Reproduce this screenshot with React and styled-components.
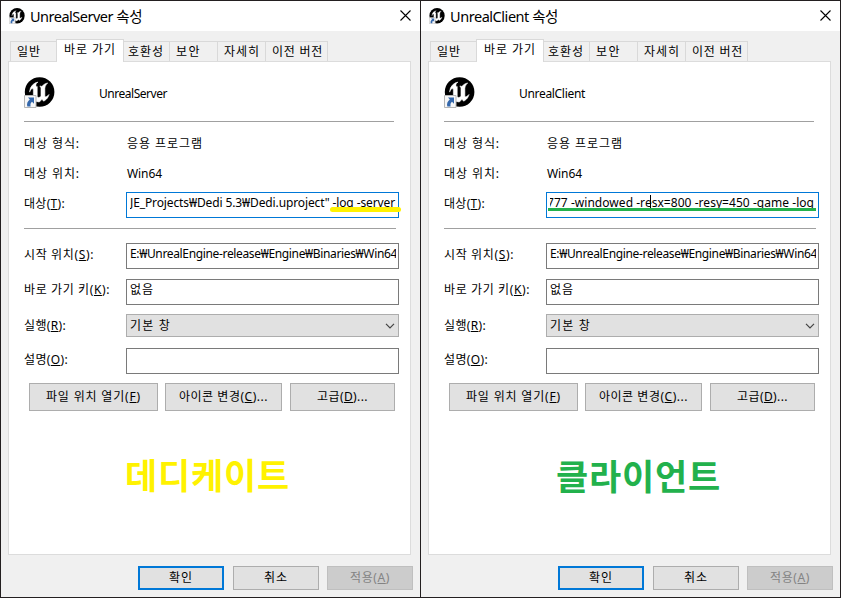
import React, { useLayoutEffect, useRef, useState } from "react";
import styled, { createGlobalStyle, css } from "styled-components";

const Global = createGlobalStyle`
  html, body { margin: 0; padding: 0; background: #231f20; overflow: hidden; }
  * { box-sizing: border-box; }
  body { font-family: "Noto Sans", "Noto Sans CJK KR", sans-serif; font-size: 12px; color: #000; }
`;

const Desktop = styled.div`
  display: flex;
  gap: 1px;
  width: 841px;
  height: 598px;
  padding: 1px;
  background: #231f20;
`;

const Dialog = styled.section`
  display: flex;
  flex-direction: column;
  width: 419px;
  height: 596px;
  background: #f0f0f0;
`;

const TitleBar = styled.header`
  display: flex;
  align-items: center;
  height: 30px;
  padding: 0 9px 0 8px;
  background: #fff;
`;

const Title = styled.h1`
  flex: 1;
  margin: 0 0 0 5px;
  font-size: 14.5px;
  font-weight: 400;
  line-height: 20px;
`;

const CloseButton = styled.button`
  display: flex;
  margin-bottom: 1px;
  padding: 0;
  border: 0;
  background: none;
`;

const TabStrip = styled.nav`
  display: flex;
  align-items: flex-end;
  height: 30px;
  padding-left: 9px;
`;

const Tab = styled.div`
  width: ${(p) => p.$width}px;
  height: 20px;
  padding-left: ${(p) => p.$pad}px;
  border: 1px solid #d9d9d9;
  border-left-width: ${(p) => (p.$first || p.$active ? 1 : 0)}px;
  border-right-width: ${(p) => (p.$first ? 0 : 1)}px;
  border-bottom: 0;
  background: #f0f0f0;
  line-height: 20px;
  ${(p) =>
    p.$active &&
    css`
      z-index: 1;
      height: 23px;
      margin-bottom: -1px;
      background: #fff;
      line-height: 19px;
    `}
`;

const Panel = styled.main`
  width: 403px;
  height: 494px;
  margin-left: 7px;
  padding-left: 15px;
  border: 1px solid #dcdcdc;
  background: #fff;
`;

const Heading = styled.div`
  display: flex;
  align-items: flex-start;
  height: 59px;
  padding-top: 15px;
`;

const ShortcutName = styled.div`
  margin: 8px 0 0 44px;
  line-height: 18px;
`;

const Rule = styled.div`
  width: ${(p) => p.$width}px;
  height: 1px;
  background: #a0a0a0;
`;

const Row = styled.div`
  display: flex;
  height: ${(p) => p.$height}px;
  margin-top: ${(p) => p.$top}px;
`;

const Label = styled.label`
  width: 102px;
  line-height: 18px;
  margin-top: ${(p) => p.$offset || 0}px;
`;

const Value = styled.div`
  padding-left: 1px;
  line-height: 18px;
  margin-top: 1px;
`;

const Field = styled.div`
  position: relative;
  width: 273px;
  height: 26px;
  padding: 1px 2px 0 3px;
  border: 1px solid ${(p) => (p.$focused ? "#0078d7" : "#7a7a7a")};
  background: #fff;
  line-height: 18px;
`;

const Clip = styled.div`
  display: flex;
  justify-content: ${(p) => (p.$end ? "flex-end" : "flex-start")};
  height: 18px;
  margin-right: ${(p) => (p.$end ? 2 : 0)}px;
  overflow: hidden;
`;

const Marker = styled.span`
  position: absolute;
  top: ${(p) => p.$top}px;
  left: ${(p) => p.$left}px;
  width: ${(p) => p.$width}px;
  height: ${(p) => p.$height}px;
  border-radius: ${(p) => (p.$round ? 3 : 0)}px;
  background: ${(p) => p.$color};
`;

const Select = styled.div`
  display: flex;
  align-items: center;
  justify-content: space-between;
  width: 273px;
  height: 23px;
  padding: 0 3px 0 3px;
  border: 1px solid #adadad;
  background: #e1e1e1;
  line-height: 18px;
`;

const Button = styled.button`
  display: flex;
  align-items: center;
  justify-content: center;
  width: ${(p) => p.$width}px;
  height: ${(p) => p.$height}px;
  padding: 0 0 1px;
  border: ${(p) => (p.$primary ? "2px solid #0078d7" : "1px solid #adadad")};
  background: #e1e1e1;
  color: #000;
  font: inherit;
  line-height: 18px;
  &:disabled {
    border-color: #bfbfbf;
    background: #ccc;
    color: #838383;
  }
`;

const Actions = styled.div`
  display: flex;
  margin: 9px 0 0 5px;
  gap: 7px;
  & > :last-child { margin-left: 1px; }
`;

const Footer = styled.footer`
  display: flex;
  justify-content: flex-end;
  gap: 9px;
  margin-top: 11px;
  padding-right: 7px;
  & > :last-child { margin-left: -1px; }
`;

const Note = styled.div`
  margin: ${(p) => p.$top}px 0 0 ${(p) => p.$left}px;
  color: ${(p) => p.$color};
  font-size: 35px;
  font-weight: 700;
  line-height: 48px;
`;

const Run = styled.span`
  display: inline-block;
  flex: none;
  white-space: pre;
`;

const Key = styled.span`
  text-decoration: underline;
  text-underline-offset: 1px;
  text-decoration-thickness: 1px;
`;

/* Spaces the letters so that the run takes the given width. */
function Fit({ w, pre = "", hot, post = "" }) {
  const ref = useRef(null);
  const [spacing, setSpacing] = useState(0);
  const count = (pre + (hot || "") + post).length;
  useLayoutEffect(() => {
    const el = ref.current;
    el.style.letterSpacing = "0px";
    const next = (w - el.getBoundingClientRect().width) / count;
    el.style.letterSpacing = next + "px";
    setSpacing(next);
  }, [w, count]);
  return (
    <Run ref={ref} style={{ letterSpacing: spacing }}>
      {pre}
      {hot && <Key>{hot}</Key>}
      {post}
    </Run>
  );
}

function UnrealIcon({ size }) {
  return (
    <svg width={size} height={size} viewBox="0 0 31 31">
      <circle cx="15.6" cy="15" r="14.8" fill="#000" />
      <path
        transform="translate(-.6 -1.4) scale(1.34 1.37)"
        fill="#fff"
        stroke="#fff"
        strokeWidth=".4"
        d="M19.13 13.729c-.206.997-1.126 3.557-4.06 4.942l-1.179-1.325-1.988 2a7.338 7.338 0 0 1-5.804-2.978 2.859 2.859 0 0 0 .65.123c.326.006.678-.114.678-.66v-5.394a.89.89 0 0 0-1.116-.89c-.92.212-1.656 2.509-1.656 2.509a7.304 7.304 0 0 1 2.528-5.597 7.408 7.408 0 0 1 3.73-1.721c-1.006.573-1.57 1.507-1.57 2.29 0 1.262.76 1.109.984.923v7.28a1.157 1.157 0 0 0 .148.256 1.075 1.075 0 0 0 .88.445c.76 0 1.747-.868 1.747-.868V9.172c0-.6-.452-1.324-.905-1.572 0 0 .838-.149 1.484.346a5.537 5.537 0 0 1 .387-.425c1.508-1.48 2.929-1.902 4.112-2.112 0 0-2.151 1.69-2.151 3.96 0 1.687.043 5.801.043 5.801.799.771 1.986-.342 3.059-1.441Z"
      />
      <path d="M.5 18.5h11.5v12H.5z" fill="#f7f7f7" stroke="#b5b5b5" />
      <path d="M4 20.5h6v6.2l-2-1.9c-1.5 1.3-1.8 2.6-1.4 4.7H3.3c-.8-3 .3-5.300 2.500-7z" fill="#3467ab" />
    </svg>
  );
}

const TABS = [
  { text: "일반", w: 24, width: 46, pad: 6 },
  { text: "바로 가기", w: 52, width: 68, pad: 7, active: true },
  { text: "호환성", w: 36, width: 46, pad: 4 },
  { text: "보안", w: 25, width: 48, pad: 6 },
  { text: "자세히", w: 36, width: 48, pad: 6 },
  { text: "이전 버전", w: 51, width: 62, pad: 6 },
];

function Properties({ name, titleWidth, nameWidth, target, note }) {
  return (
    <Dialog>
      <TitleBar>
        <UnrealIcon size={16} />
        <Title><Fit w={titleWidth} pre={`${name} 속성`} /></Title>
        <CloseButton aria-label="닫기">
          <svg width="11" height="11" viewBox="0 0 11 11">
            <path d="M.5.5l10 10M10.5.5l-10 10" stroke="#000" strokeWidth="1.1" />
          </svg>
        </CloseButton>
      </TitleBar>
      <TabStrip>
        {TABS.map((t, i) => (
          <Tab key={t.text} $width={t.width} $pad={t.pad} $active={t.active} $first={i === 0}>
            <Fit w={t.w} pre={t.text} />
          </Tab>
        ))}
      </TabStrip>
      <Panel>
        <Heading>
          <UnrealIcon size={31} />
          <ShortcutName><Fit w={nameWidth} pre={name} /></ShortcutName>
        </Heading>
        <Rule $width={370} />
        <Row $height={18} $top={12}>
          <Label $offset={1}><Fit w={56} pre="대상 형식:" /></Label>
          <Value><Fit w={76} pre="응용 프로그램" /></Value>
        </Row>
        <Row $height={18} $top={12}>
          <Label $offset={1}><Fit w={56} pre="대상 위치:" /></Label>
          <Value><Fit w={35} pre="Win64" /></Value>
        </Row>
        <Row $height={26} $top={10}>
          <Label $offset={3}><Fit w={41} pre="대상(" hot="T" post="):" /></Label>
          <Field $focused>{target}</Field>
        </Row>
        <Row $height={1} $top={10}><Rule $width={372} /></Row>
        <Row $height={26} $top={14}>
          <Label $offset={3}><Fit w={70} pre="시작 위치(" hot="S" post="):" /></Label>
          <Field>
            <Clip><Fit w={267} pre="E:₩UnrealEngine-release₩Engine₩Binaries₩Win64" /></Clip>
          </Field>
        </Row>
        <Row $height={26} $top={10}>
          <Label $offset={2}><Fit w={86} pre="바로 가기 키(" hot="K" post="):" /></Label>
          <Field><Fit w={24} pre="없음" /></Field>
        </Row>
        <Row $height={23} $top={9}>
          <Label $offset={3}><Fit w={42} pre="실행(" hot="R" post="):" /></Label>
          <Select>
            <Fit w={41} pre="기본 창" />
            <svg width="10" height="6" viewBox="0 0 10 6">
              <path d="M1 .8l4 4 4-4" fill="none" stroke="#444" strokeWidth="1.2" />
            </svg>
          </Select>
        </Row>
        <Row $height={26} $top={11}>
          <Label $offset={3}><Fit w={44} pre="설명(" hot="O" post="):" /></Label>
          <Field />
        </Row>
        <Actions>
          <Button $width={129} $height={28}><Fit w={95} pre="파일 위치 열기(" hot="F" post=")" /></Button>
          <Button $width={117} $height={28}><Fit w={89} pre="아이콘 변경(" hot="C" post=")..." /></Button>
          <Button $width={105} $height={28}><Fit w={51} pre="고급(" hot="D" post=")..." /></Button>
        </Actions>
        {note}
      </Panel>
      <Footer>
        <Button $width={86} $height={24} $primary><Fit w={24} pre="확인" /></Button>
        <Button $width={86} $height={24}><Fit w={24} pre="취소" /></Button>
        <Button $width={86} $height={24} disabled><Fit w={40} pre="적용(" hot="A" post=")" /></Button>
      </Footer>
    </Dialog>
  );
}

export default function App() {
  return (
    <>
      <Global />
      <Desktop>
        <Properties
          name="UnrealServer"
          titleWidth={112}
          nameWidth={68}
          target={
            <>
              <Clip><Fit w={265} pre={'JE_Projects₩Dedi 5.3₩Dedi.uproject" -log -server'} /></Clip>
              <Marker $top={14} $left={203} $width={71} $height={5} $color="#fff200" $round />
            </>
          }
          note={<Note $top={41} $left={101} $color="#fff200"><Fit w={165} pre="데디케이트" /></Note>}
        />
        <Properties
          name="UnrealClient"
          titleWidth={108}
          nameWidth={66}
          target={
            <>
              <Clip $end><Fit w={267} pre="777 -windowed -resx=800 -resy=450 -game -log" /></Clip>
              <Marker $top={15} $left={1} $width={268} $height={3} $color="#22b14c" />
              <Marker $top={2} $left={103} $width={1} $height={13} $color="#000" />
            </>
          }
          note={<Note $top={42} $left={112} $color="#22b14c"><Fit w={165} pre="클라이언트" /></Note>}
        />
      </Desktop>
    </>
  );
}
